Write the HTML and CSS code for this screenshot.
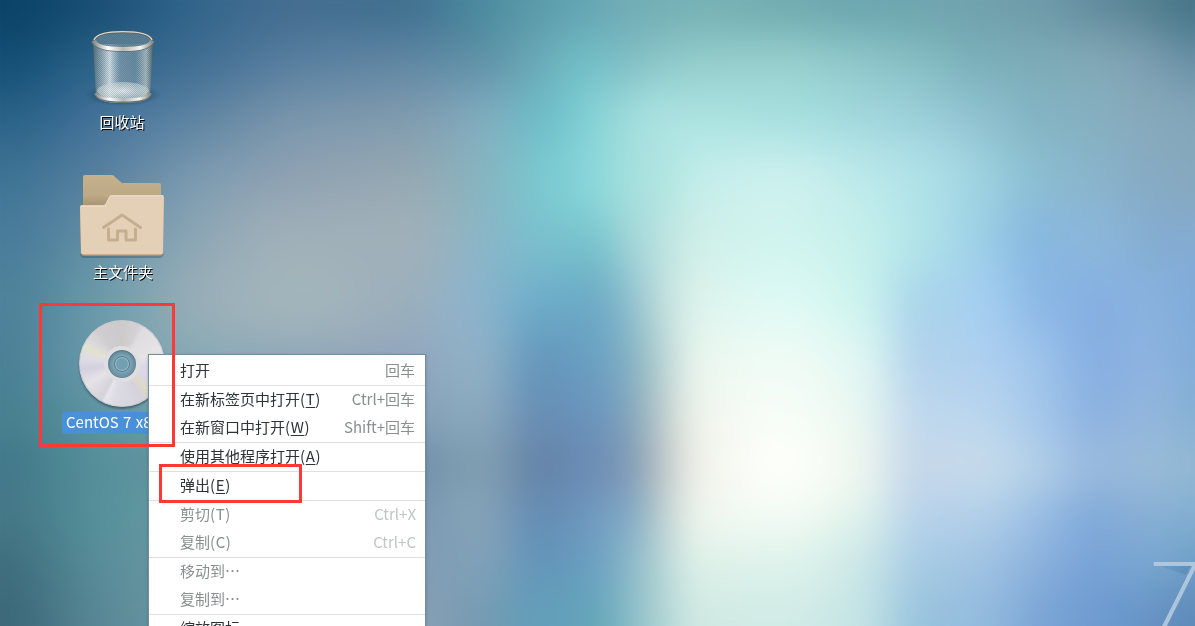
FILE: index.html
```html
<!DOCTYPE html>
<html lang="zh-CN">
<head>
<meta charset="utf-8">
<title>桌面</title>
<link rel="stylesheet" href="styles.css">
</head>
<body>
<main class="desktop">
  <canvas class="wallpaper" width="1255" height="686"></canvas>
  <svg class="facet" width="45" height="70" viewBox="0 0 45 70"><defs><linearGradient id="facet" x1="1" y1="0" x2="0" y2="0"><stop offset="0" stop-color="#4878a8" stop-opacity=".4"/><stop offset="1" stop-color="#4878a8" stop-opacity=".1"/></linearGradient></defs><path d="M3 7H38L33 17Z" fill="url(#facet)"/></svg>
  <div class="release">7</div>

  <div class="launcher trash">
    <svg class="icon" width="84" height="84" viewBox="0 0 84 84">
      <defs>
        <linearGradient id="can" x1="0" x2="1"><stop offset="0" stop-color="#58696c" stop-opacity=".9"/><stop offset=".1" stop-color="#9eb0b4" stop-opacity=".7"/><stop offset=".28" stop-color="#f3f7f8" stop-opacity=".85"/><stop offset=".45" stop-color="#a1b3bd" stop-opacity=".6"/><stop offset=".7" stop-color="#8ca4b0" stop-opacity=".6"/><stop offset=".88" stop-color="#c3cdcb" stop-opacity=".8"/><stop offset="1" stop-color="#536461" stop-opacity=".9"/></linearGradient>
        <linearGradient id="rim" x1="0" x2="1"><stop offset="0" stop-color="#8b8e8b"/><stop offset=".25" stop-color="#fff"/><stop offset=".5" stop-color="#b5b8b5"/><stop offset=".8" stop-color="#f4f4f1"/><stop offset="1" stop-color="#898c88"/></linearGradient>
        <radialGradient id="floor"><stop offset="0" stop-color="#fff" stop-opacity=".85"/><stop offset="1" stop-color="#d4dfdb" stop-opacity=".55"/></radialGradient>
        <radialGradient id="canShadow"><stop offset=".5" stop-color="#00182a" stop-opacity=".35"/><stop offset="1" stop-color="#00182a" stop-opacity="0"/></radialGradient>
        <pattern id="mesh" width="2" height="2" patternUnits="userSpaceOnUse"><path d="M0 0h1v1H0zM1 1h1v1H1z" fill="#34576c" opacity=".2"/></pattern>
      </defs>
      <ellipse cx="42" cy="67" rx="38" ry="11" fill="url(#canShadow)"/>
      <path d="M12 16L15 68Q18 75 42 75T69 68L72 16Z" fill="url(#can)"/>
      <ellipse cx="42" cy="63" rx="26" ry="9" fill="url(#floor)"/>
      <path d="M12 16L15 68Q18 75 42 75T69 68L72 16Z" fill="url(#mesh)"/>
      <ellipse cx="42" cy="12" rx="28" ry="8" fill="#6a8b9b" opacity=".75"/>
      <ellipse cx="42" cy="12" rx="28" ry="8" fill="url(#mesh)"/>
      <path d="M15 65Q17 73 42 73T69 65" fill="none" stroke="#6b7371" stroke-width="4"/>
      <path d="M15 65Q17 72 42 72T69 65" fill="none" stroke="url(#rim)" stroke-width="3"/>
      <path d="M13 13Q15 4 42 4T71 13" fill="none" stroke="#62615d" stroke-width="2.6"/>
      <path d="M13 12Q16 3.6 42 3.6T71 12" fill="none" stroke="#d9dad6" stroke-width="1.4"/>
      <path d="M13 13Q15 21.5 42 21.5T71 13" fill="none" stroke="#65716f" stroke-width="5"/>
      <path d="M13 12.5Q15 21 42 21T71 12.5" fill="none" stroke="url(#rim)" stroke-width="4"/>
    </svg>
    <span class="name">回收站</span>
  </div>

  <div class="launcher home">
    <svg class="icon" width="88" height="88" viewBox="0 0 88 88">
      <defs><linearGradient id="back" x1="0" y1="0" x2="0" y2="1"><stop offset="0" stop-color="#c5b28d"/><stop offset=".6" stop-color="#bda985"/><stop offset="1" stop-color="#a08e6c"/></linearGradient></defs>
      <path d="M5 6Q5 4 7 4H34Q36 4 37 6L44 12H81Q83 12 83 14V38H5Z" fill="url(#back)"/>
      <path d="M2 83Q3 87 6 87H81Q85 87 86 83" fill="#253a48" opacity=".3"/>
      <path d="M2 36Q2 34 4 34H25Q27 34 28 32L31 26Q32 24 34 24H84Q86 24 86 26L85 82Q85 85 82 85H6Q3 85 3 82Z" fill="#b28e68"/>
      <path d="M2 36Q2 34 4 34H25Q27 34 28 32L31 26Q32 24 34 24H84Q86 24 86 26L85 81Q85 83.5 82 83.5H6Q3 83.5 3 81Z" fill="#e3d0b7"/>
      <path d="M3 35.5H27L32 25H85" fill="none" stroke="#ecdac3"/>
      <path d="M25.500 56.500L44 44L62.500 56.500M30.500 58V69H39.500V60H48V69H57.500V58" fill="none" stroke="#c5ae8d" stroke-width="2.900" stroke-linejoin="round" stroke-linecap="round"/>
    </svg>
    <span class="name">主文件夹</span>
  </div>

  <div class="launcher disc">
    <div class="platter"><div class="hub"><div class="hole"></div></div></div>
    <span class="name selected">CentOS 7 x86_64</span>
  </div>

  <nav class="menu">
    <div class="item"><span>打开</span><span class="key">回车</span></div>
    <hr>
    <div class="item"><span>在新标签页中打开<span class="mn">(<u>T</u>)</span></span><span class="key">Ctrl+回车</span></div>
    <div class="item"><span>在新窗口中打开<span class="mn">(<u>W</u>)</span></span><span class="key">Shift+回车</span></div>
    <hr>
    <div class="item"><span>使用其他程序打开<span class="mn">(<u>A</u>)</span></span></div>
    <hr>
    <div class="item"><span>弹出<span class="mn">(<u>E</u>)</span></span></div>
    <hr>
    <div class="item off"><span>剪切<span class="mn">(T)</span></span><span class="key">Ctrl+X</span></div>
    <div class="item off"><span>复制<span class="mn">(C)</span></span><span class="key">Ctrl+C</span></div>
    <hr>
    <div class="item off"><span>移动到⋯</span></div>
    <div class="item off"><span>复制到⋯</span></div>
    <hr>
    <div class="item"><span>缩放图标…</span></div>
  </nav>

  <div class="mark mark-disc"></div>
  <div class="mark mark-eject"></div>
</main>
<script src="wallpaper.js"></script>
</body>
</html>
```
FILE: wallpaper.js
```js
// Soft colour mesh: colours at grid nodes, smoothly interpolated.
const xs = [0,100,200,300,400,480,540,590,630,660,700,780,860,920,980,1040,1100,1150,1195];
const ys = [0,60,120,180,240,300,360,420,465,510,560,626];
const rows = [
"0b4266 1b4f75 33658b 446d90 41708f 4b8a9f 5c9caa 65a6b3 72adb5 73afb5 76b1b5 72abb0 6ca6ae 6ea5ae 70a1ac 6e9aa9 608b9c 54808f 467588",
"154f75 2b6287 426f94 587f9f 5f86a3 6092a8 6aabb8 73bec6 80bfc5 8cc6c9 94cccb 96cecd 8dc5c9 85bcc2 7bb0ba 7dabb7 81a7b6 799daf 6890a5",
"2b6287 45739a 6086a3 7a96ac 809bae 81acbe 6fbdc8 84d1d5 a0dcdc abe2e1 ace3e1 a9e1e0 a3d9de 9cd0da 90c2d0 84b4c4 85afc0 87a9bb 83a6ba",
"3f7495 5982a0 7d9bb0 90a3b3 95a8b3 87b4c0 7bc8cf 8ad6da a5dfdd afe4e0 c3edea ccf0ee bde9ea afe1e8 9ed2df 8bbdd2 89b3cb 86abc4 86a9bf",
"497c9a 6690a6 8ea7b5 a0b0b9 a0b0b9 8bb5c6 7abfcd 78c3cd a1d5d8 b8e1df d0efe9 d1f4ef c5efec b1e3e9 9dcfe6 88b8df 8bb6da 85add1 84abd1",
"4d829a 6c9aaa 98aeb8 a3b5bb 9bafbb 8bb3cc 6eadc8 6cabc6 90c0ce bcdcdb dcf3ec def9f4 ccf3ee abd5eb a5cff0 8cb8e5 86b0e1 89b2de 80abd9",
"4b8096 6a9bab 87a9b4 8fa8b8 91a5bd 8eb0c5 6598bc 6a9fc2 85b2c4 b4d0d1 eaf6ef effbf5 dff6f2 b3d3ec aed0ef 9dc3ea 87afe1 8eb3e0 82add9",
"48808f 5d939f 739faa 7a9aac 829db5 88a7bc 688db3 6b94bc 84a5bc b9c8cb eff4eb f8fdf8 e8f6f0 c0d8ed bbd6ed a4c7ea 8eb3df 93b7dc 87b1d4",
"42788a 568f9a 6493a0 6b8da0 6d8fa8 809db0 6585a8 6c8cb4 839db6 b8c2c6 f0f1ea fdfffa edf5ef c5d7ea c5daea b0cde7 98b9dc 98bbd8 91b7d2",
"457888 56909a 6a9aa5 7598a8 7898b0 84a2b7 658cb3 7098bf 83a9c4 b9cbce eef5ed f4fbf5 e0f2ec b9d3ea b4d0e9 9bbfe3 84acd9 8ab0d5 83afd1",
"3f6f7e 588d99 6d98a5 7799aa 7f9ab2 80a1b8 6395b9 6b9fc1 8cb8c8 b3d2d4 dff1e9 dff3ec cce7e7 a9cce5 a1c4e2 8cb2dd 79a3d6 79a7d0 70a0c8",
"3c6879 598795 6e98a6 7a9aaa 8aa0b5 759bb2 639fb9 63a5b8 8abcc8 add2d3 d0e9e2 d1ebe6 c3e3e5 99c3dd 93bbdd 7ba5d5 6d9ad0 6693c4 5e89b8"
].map(r => r.split(" ").map(h => [0, 2, 4].map(i => parseInt(h.slice(i, i + 2), 16))));

// Monotone cubic interpolation through unevenly spaced nodes.
function curve(ps, vs, p) {
  p = Math.min(Math.max(p, ps[0]), ps[ps.length - 1]);
  let i = 0;
  while (i < ps.length - 2 && p > ps[i + 1]) i++;
  const h = ps[i + 1] - ps[i], t = (p - ps[i]) / h;
  const slope = k => {
    if (k === 0 || k === ps.length - 1) return 0;
    const a = (vs[k] - vs[k - 1]) / (ps[k] - ps[k - 1]);
    const b = (vs[k + 1] - vs[k]) / (ps[k + 1] - ps[k]);
    return a * b <= 0 ? 0 : 2 * a * b / (a + b);
  };
  const t2 = t * t, t3 = t2 * t;
  return (2*t3 - 3*t2 + 1) * vs[i] + (t3 - 2*t2 + t) * h * slope(i)
    + (3*t2 - 2*t3) * vs[i + 1] + (t3 - t2) * h * slope(i + 1);
}

const canvas = document.querySelector(".wallpaper");
const ctx = canvas.getContext("2d");
const W = canvas.width, H = canvas.height, bleed = 30;
const image = ctx.createImageData(W, H);
const wide = rows.map(r => [0, 1, 2].map(c => {
  const vs = r.map(v => v[c]);
  return Float32Array.from({ length: W }, (_, x) => curve(xs, vs, x - bleed));
}));
for (let x = 0; x < W; x++) {
  for (let c = 0; c < 3; c++) {
    const vs = wide.map(r => r[c][x]);
    for (let y = 0; y < H; y++) image.data[(y * W + x) * 4 + c] = curve(ys, vs, y - bleed);
  }
  for (let y = 0; y < H; y++) image.data[(y * W + x) * 4 + 3] = 255;
}
ctx.putImageData(image, 0, 0);
```
FILE: styles.css
```css
* { box-sizing: border-box; }
body { margin: 0; overflow: hidden; font: 15px/20px "Noto Sans CJK SC", sans-serif; }
.desktop { position: relative; width: 1195px; height: 626px; overflow: hidden; background: #79a5b8; }
.wallpaper { display: block; margin: -30px; filter: blur(14px); }
.facet { position: absolute; left: 1153px; top: 558px; }
.release { position: absolute; left: 1148px; top: 547px; font: 300 92px/1 Lato, sans-serif; color: rgba(184, 206, 226, .85); }

.launcher { position: absolute; width: 130px; display: flex; flex-direction: column; align-items: center; }
.icon { display: block; flex: none; }
.name { color: #fff; white-space: nowrap; text-shadow: 1px 1px 0 #000; }
.trash { left: 57px; top: 28px; }
.trash .icon { margin-left: 2px; }
.home { left: 57px; top: 171px; }
.home .name { margin: 3px 0 0 2px; }
.disc { left: 57px; top: 320px; }
.platter { width: 86px; height: 87px; border-radius: 50%; display: grid; place-items: center; margin-bottom: 5px; border: 1px solid #c9cbd0; box-shadow: 0 2px 2px rgba(50, 65, 75, .6);
  background: conic-gradient(from 0deg, #cdcacb 0, #d4d1d3 24deg, #dfdde0 32deg, #e6e4e5 75deg, #dcd9e8 95deg, #dad7e6 120deg, #ded9c9 137deg, #d5d2dc 150deg, #dcdbe3 190deg, #e6e5ed 205deg, #d5d3da 210deg, #e5e3e7 240deg, #d3d0e0 262deg, #dedce4 278deg, #e2e2d0 294deg, #dcdbd9 303deg, #d0cdd2 325deg, #cdcacb 360deg); }
.hub { width: 36px; height: 36px; border-radius: 50%; display: grid; place-items: center; border: 4px solid #dfdee0; background: radial-gradient(circle, #82a8b9 0 35%, #658b9d 70%); box-shadow: inset 0 1px 2px #557080; }
.hole { width: 14px; height: 14px; border-radius: 50%; border: 1px solid #a4c0ca; background: #71a0b3; outline: 1px solid #557f92; }
.selected { align-self: flex-start; margin-left: 5px; width: 119px; height: 22px; line-height: 20px; padding-left: 4px; border-radius: 4px; background: #4a90d9; text-shadow: none; word-spacing: 1px; overflow: hidden; }

.menu { position: absolute; left: 148px; top: 354px; width: 278px; height: 300px; padding-top: 2px; border: 1px solid #708f9f; background: #fff; color: #2e3436; box-shadow: 0 1px 3px rgba(0, 0, 0, .2); }
.menu hr { height: 1px; margin: 0; border: 0; background: #e0e0e0; }
.item { height: 28px; padding: 0 10px 2px 31px; display: flex; justify-content: space-between; align-items: center; white-space: nowrap; }
.item u { text-underline-offset: 2px; text-decoration-thickness: 1px; }
.mn { letter-spacing: .6px; }
.key { color: #8b8e8f; }
.off { color: #8b8e8f; padding-right: 9px; }
.off .key { color: #c2c4c4; }

.mark { position: absolute; border: 3px solid #ff3837; }
.mark-disc { left: 39px; top: 303px; width: 136px; height: 144px; }
.mark-eject { left: 159px; top: 464px; width: 143px; height: 39px; }
```
